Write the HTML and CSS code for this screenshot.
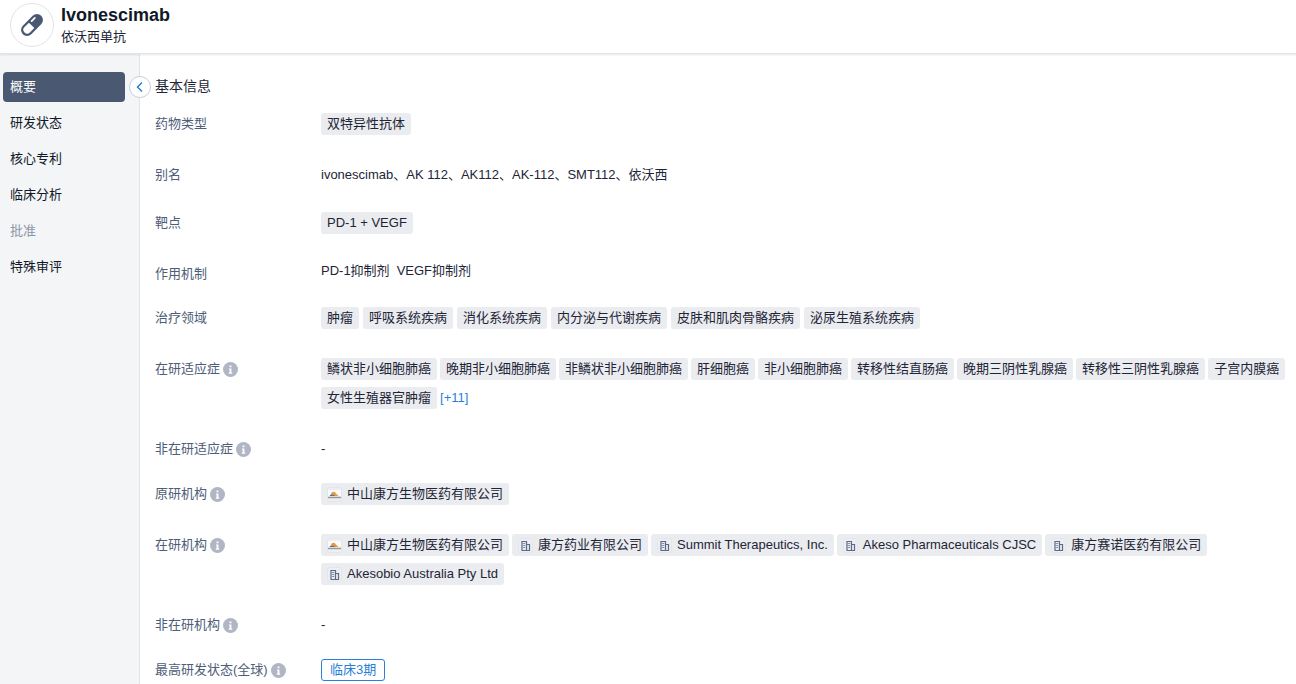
FILE: index.html
```html
<!DOCTYPE html>
<html lang="zh-CN">
<head>
    <meta charset="UTF-8">
    <meta name="viewport" content="width=device-width, initial-scale=1.0">
    <title>Ivonescimab</title>
    <link rel="stylesheet" href="styles.css">
</head>
<body>

    <!-- shared icons -->
    <svg class="sprite" width="0" height="0" aria-hidden="true">
        <symbol id="icon-info" viewBox="0 0 16 16">
            <circle cx="8" cy="8" r="8" fill="#b0b6c3"/>
            <path d="M7 3.6h2v2H7zM6.4 6.8H9v4.4h.8v1.2H6.2v-1.2H7V8h-.6z" fill="#fff"/>
        </symbol>
        <symbol id="icon-building" viewBox="0 0 15 15">
            <rect x=".5" y=".5" width="14" height="14" rx="2" fill="#edeef2" stroke="#e4e6eb"/>
            <path d="M4 12.500V3.500h4.500v9M8.500 6.500h3v6M3.500 12.500h8.500" fill="none" stroke="#5a6a87" stroke-width="1.200"/>
            <path d="M5.200 5.500h2M5.200 7.500h2M5.200 9.500h2" stroke="#7d89a1"/>
        </symbol>
        <symbol id="icon-akeso" viewBox="0 0 15 15">
            <rect x=".5" y=".5" width="14" height="14" rx="2" fill="#edeef2" stroke="#e4e6eb"/>
            <path d="M1 3h13v9H1z" fill="#fafafa"/>
            <path d="M4 6.500a2.700 2.700 0 0 1 5 0L11.500 9H7z" fill="#ee9a3a"/>
            <path d="M2.500 9c1-2 2.500-2.400 4-1.200L8.500 9z" fill="#4d78a8"/>
            <path d="M1 10.500h13" stroke="#9a9691" stroke-width="1.600"/>
        </symbol>
    </svg>

    <header class="header">
        <div class="drug-icon">
            <svg width="26" height="26" viewBox="0 0 26 26" aria-hidden="true">
                <g transform="rotate(-45 13 13)">
                    <rect x="0" y="7" width="26" height="12" rx="6" fill="#4a5872"/>
                    <path d="M12.500 9.200H6.200a3.800 3.800 0 0 0 0 7.600h6.300z" fill="#fff"/>
                    <path d="M15.500 10h4.500" stroke="#fff" stroke-width="1.800" stroke-linecap="round"/>
                </g>
            </svg>
        </div>
        <div>
            <h1>Ivonescimab</h1>
            <p class="sub-name">依沃西单抗</p>
        </div>
    </header>

    <div class="layout">
        <nav class="sidebar">
            <a class="active" href="#overview">概要</a>
            <a href="#status">研发状态</a>
            <a href="#patent">核心专利</a>
            <a href="#clinical">临床分析</a>
            <a class="disabled" aria-disabled="true">批准</a>
            <a href="#review">特殊审评</a>
            <button class="collapse" type="button" aria-label="收起">
                <svg width="12" height="12" viewBox="0 0 12 12"><path d="M8 1.500 3.500 6 8 10.500" fill="none" stroke="#2b7fd9" stroke-width="1.500"/></svg>
            </button>
        </nav>

        <main class="content" id="overview">
            <h2>基本信息</h2>
            <dl>
                <div class="row">
                    <dt>药物类型</dt>
                    <dd class="tags"><span class="tag">双特异性抗体</span></dd>
                </div>
                <div class="row alias">
                    <dt>别名</dt>
                    <dd>ivonescimab、AK 112、AK112、AK-112、SMT112、依沃西</dd>
                </div>
                <div class="row">
                    <dt>靶点</dt>
                    <dd class="tags"><span class="tag">PD-1 + VEGF</span></dd>
                </div>
                <div class="row mechanism">
                    <dt>作用机制</dt>
                    <dd><span>PD-1抑制剂</span><span>VEGF抑制剂</span></dd>
                </div>
                <div class="row">
                    <dt>治疗领域</dt>
                    <dd class="tags">
                        <span class="tag">肿瘤</span>
                        <span class="tag">呼吸系统疾病</span>
                        <span class="tag">消化系统疾病</span>
                        <span class="tag">内分泌与代谢疾病</span>
                        <span class="tag">皮肤和肌肉骨骼疾病</span>
                        <span class="tag">泌尿生殖系统疾病</span>
                    </dd>
                </div>
                <div class="row">
                    <dt>在研适应症<svg class="info"><use href="#icon-info"/></svg></dt>
                    <dd class="tags dense">
                        <span class="tag">鳞状非小细胞肺癌</span>
                        <span class="tag">晚期非小细胞肺癌</span>
                        <span class="tag">非鳞状非小细胞肺癌</span>
                        <span class="tag">肝细胞癌</span>
                        <span class="tag">非小细胞肺癌</span>
                        <span class="tag">转移性结直肠癌</span>
                        <span class="tag">晚期三阴性乳腺癌</span>
                        <span class="tag">转移性三阴性乳腺癌</span>
                        <span class="tag">子宫内膜癌</span>
                        <span class="tag">女性生殖器官肿瘤</span>
                        <button class="more" type="button">[+11]</button>
                    </dd>
                </div>
                <div class="row empty">
                    <dt>非在研适应症<svg class="info"><use href="#icon-info"/></svg></dt>
                    <dd>-</dd>
                </div>
                <div class="row">
                    <dt>原研机构<svg class="info"><use href="#icon-info"/></svg></dt>
                    <dd class="tags dense">
                        <span class="tag org"><svg><use href="#icon-akeso"/></svg>中山康方生物医药有限公司</span>
                    </dd>
                </div>
                <div class="row">
                    <dt>在研机构<svg class="info"><use href="#icon-info"/></svg></dt>
                    <dd class="tags dense">
                        <span class="tag org"><svg><use href="#icon-akeso"/></svg>中山康方生物医药有限公司</span>
                        <span class="tag org"><svg><use href="#icon-building"/></svg>康方药业有限公司</span>
                        <span class="tag org"><svg><use href="#icon-building"/></svg>Summit Therapeutics, Inc.</span>
                        <span class="tag org"><svg><use href="#icon-building"/></svg>Akeso Pharmaceuticals CJSC</span>
                        <span class="tag org"><svg><use href="#icon-building"/></svg>康方赛诺医药有限公司</span>
                        <span class="tag org"><svg><use href="#icon-building"/></svg>Akesobio Australia Pty Ltd</span>
                    </dd>
                </div>
                <div class="row empty">
                    <dt>非在研机构<svg class="info"><use href="#icon-info"/></svg></dt>
                    <dd>-</dd>
                </div>
                <div class="row">
                    <dt>最高研发状态(全球)<svg class="info"><use href="#icon-info"/></svg></dt>
                    <dd class="tags"><span class="phase">临床3期</span></dd>
                </div>
            </dl>
        </main>
    </div>

</body>
</html>
```

FILE: styles.css
```css
* {
    box-sizing: border-box;
}
body {
    margin: 0;
    min-height: 100vh;
    display: flex;
    flex-direction: column;
    font-family: "Liberation Sans", "Noto Sans CJK SC", sans-serif;
    font-size: 13px;
    line-height: 22px;
    color: #1d2536;
    background-color: #fff;
}
h1, h2, p, dl, dd {
    margin: 0;
}
button {
    font: inherit;
    cursor: pointer;
}
.sprite {
    position: absolute;
}

/* header */
.header {
    display: flex;
    gap: 7px;
    height: 54px;
    padding: 3px 10px;
    border-bottom: 1px solid #e2e4e8;
    box-shadow: 0 1px 2px rgba(0, 0, 0, 0.1);
    position: relative;
    z-index: 1;
}
.drug-icon {
    display: flex;
    align-items: center;
    justify-content: center;
    width: 44px;
    height: 44px;
    border: 1px solid #e2e4e8;
    border-radius: 50%;
}
h1 {
    font-size: 18px;
    line-height: 24px;
    color: #111827;
}
.sub-name {
    line-height: 20px;
}

/* sidebar */
.layout {
    display: flex;
    flex: 1;
}
.sidebar {
    position: relative;
    display: flex;
    flex-direction: column;
    gap: 6px;
    flex: 0 0 140px;
    padding: 18px 14px 0 3px;
    background-color: #f3f5f7;
    border-right: 1px solid #e0e3e8;
}
.sidebar a {
    padding: 4px 7px;
    border-radius: 4px;
    color: #111827;
    text-decoration: none;
}
.sidebar .active {
    background-color: #4a5872;
    color: #fff;
}
.sidebar .disabled {
    color: #8b95a7;
}
.collapse {
    position: absolute;
    top: 22px;
    right: -12px;
    display: flex;
    align-items: center;
    justify-content: center;
    width: 22px;
    height: 22px;
    padding: 0;
    border: 1px solid #c9ced8;
    border-radius: 50%;
    background-color: #fff;
}

/* content */
.content {
    flex: 1;
    min-width: 0;
    padding: 21px 0 0 15px;
}
h2 {
    margin-bottom: 16px;
    font-size: 14px;
    font-weight: normal;
}
.row {
    display: flex;
    padding-bottom: 22px;
}
.row:last-child {
    padding-bottom: 0;
}
dt {
    display: flex;
    align-items: center;
    gap: 3px;
    flex: 0 0 166px;
    height: 22px;
    color: #4e5d78;
}
dd {
    flex: 1;
    min-width: 0;
}
.info {
    width: 15px;
    height: 15px;
}
.alias {
    padding-bottom: 26px;
}
.mechanism dd {
    display: flex;
    gap: 7px;
    margin-top: -3px;
}
.empty {
    padding-bottom: 23px;
}
.tags {
    display: flex;
    flex-wrap: wrap;
    gap: 7px 4px;
    margin-bottom: 7px;
}
.dense {
    column-gap: 3px;
}
.row:last-child .tags {
    margin-bottom: 0;
}
.tag {
    padding: 0 6px;
    border-radius: 3px;
    background-color: #ebecf0;
}
.org {
    display: flex;
    align-items: center;
    gap: 5px;
}
.org svg {
    width: 15px;
    height: 15px;
}
.more {
    padding: 0;
    border: none;
    background: none;
    color: #2b7fd9;
}
.phase {
    padding: 0 8px;
    border: 1px solid #2b7fd9;
    border-radius: 3px;
    line-height: 20px;
    color: #2b7fd9;
}
```
